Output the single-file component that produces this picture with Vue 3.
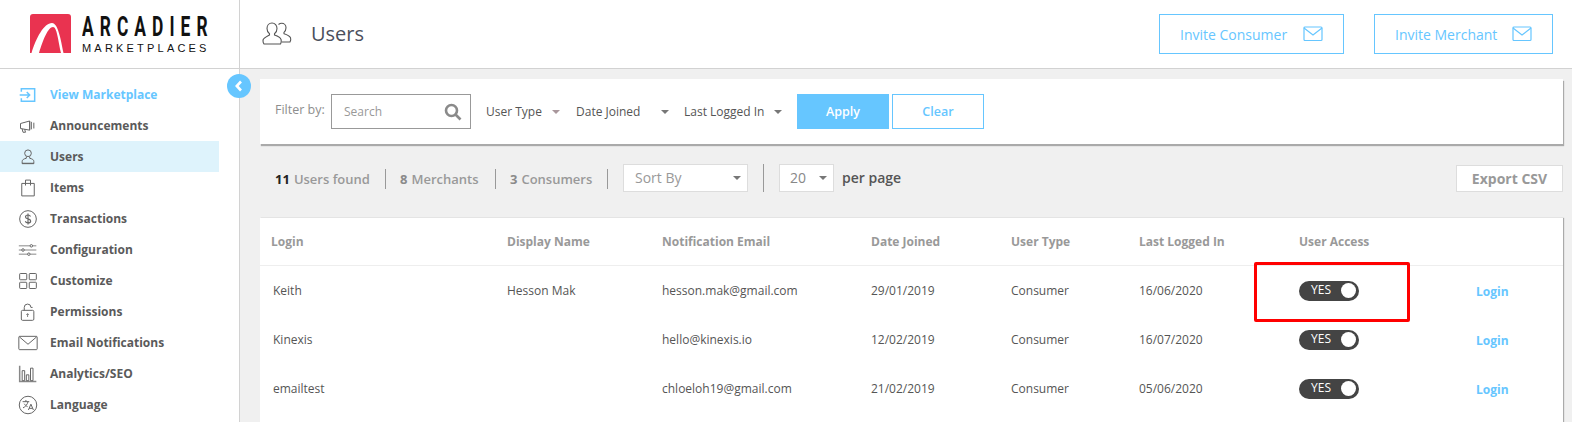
<template>
  <div class="page">
    <aside class="sidebar">
      <div class="logo">
        <svg class="logo-mark" width="41" height="39" viewBox="0 0 41 39">
          <path d="M3 0h35a3 3 0 0 1 3 3v36H0V3a3 3 0 0 1 3-3z" fill="#e93350" />
          <path d="M1.500 39C6 24 14 9 22 9 28 9 31 26 33.500 39H31C28 26 27 13 23 13 18 13 13 26 9 39H1.500z" fill="#fff" />
        </svg>
        <div class="logo-text">
          <span class="logo-name">ARCADIER</span>
          <span class="logo-sub">MARKETPLACES</span>
        </div>
      </div>
      <nav class="nav">
        <a
          v-for="item in navItems"
          :key="item.label"
          class="nav-item"
          :class="{ active: item.active, link: item.link }"
        >
          <svg class="nav-icon" width="24" height="24" viewBox="0 0 24 24" fill="none" stroke="currentColor" stroke-width="1.200" v-html="item.icon"></svg>
          <span>{{ item.label }}</span>
        </a>
      </nav>
    </aside>

    <button class="collapse">
      <svg width="10" height="12" viewBox="0 0 10 12"><path d="M7 1.500 2.800 6 7 10.500" fill="none" stroke="#fff" stroke-width="2.600" /></svg>
    </button>

    <div class="main">
      <header class="topbar">
        <div class="title">
          <svg width="32" height="28" viewBox="0 0 32 28" fill="none" stroke="#555" stroke-width="1.100">
            <path d="M10 3c3 0 5 2.500 5 5.500 0 2.500-1.200 4.300-2.500 5.200v1.300c3 1 6 2.300 6.500 4.500.4 1.500.3 3-.5 4.500H2c-1-1.500-1.200-3-.8-4.500C2 18 5 16.500 7.500 15v-1.300C6.200 12.800 5 11 5 8.500 5 5.500 7 3 10 3z" />
            <path d="M16.500 4.500c1-.8 2-1.200 3.200-1.200 2.500 0 4.300 2 4.300 4.500 0 2-.8 3.500-2 4.500v1.400c2.500.8 5.500 2 6.500 4 .5 1.500.3 3-.5 4.300h-8.300" />
          </svg>
          <h1>Users</h1>
        </div>
        <div class="invites">
          <button class="invite consumer">
            <span>Invite Consumer</span>
            <svg width="20" height="16" viewBox="0 0 20 16" fill="none" stroke="#66c6ff" stroke-width="1.200"><rect x="1" y="1" width="18" height="13.500" rx="1" /><path d="M1 2l9 7 9-7" /></svg>
          </button>
          <button class="invite merchant">
            <span>Invite Merchant</span>
            <svg width="20" height="16" viewBox="0 0 20 16" fill="none" stroke="#66c6ff" stroke-width="1.200"><rect x="1" y="1" width="18" height="13.500" rx="1" /><path d="M1 2l9 7 9-7" /></svg>
          </button>
        </div>
      </header>

      <div class="content">
        <section class="filters">
          <label class="filter-label">Filter by:</label>
          <div class="search">
            <span>Search</span>
            <svg width="18" height="18" viewBox="0 0 18 18" fill="none" stroke="#8a8a8a" stroke-width="2.600"><circle cx="7.500" cy="7.500" r="5.500" /><path d="M11.500 11.500 16.500 16.500" /></svg>
          </div>
          <div class="drop user-type">User Type<i class="caret light"></i></div>
          <div class="drop date-joined">Date Joined<i class="caret"></i></div>
          <div class="drop last-logged">Last Logged In<i class="caret"></i></div>
          <button class="apply">Apply</button>
          <button class="clear">Clear</button>
        </section>

        <section class="stats">
          <span class="stat first"><b>11</b> Users found</span>
          <span class="stat second"><em>8</em> Merchants</span>
          <span class="stat third"><em>3</em> Consumers</span>
          <div class="box sort">Sort By<i class="caret"></i></div>
          <span class="sep"></span>
          <div class="box size">20<i class="caret"></i></div>
          <span class="per">per page</span>
          <button class="export">Export CSV</button>
        </section>

        <section class="table">
          <div class="row head">
            <div v-for="h in headers" :key="h">{{ h }}</div>
          </div>
          <div v-for="u in users" :key="u.login" class="row">
            <div class="login-name">{{ u.login }}</div>
            <div>{{ u.display }}</div>
            <div>{{ u.email }}</div>
            <div>{{ u.joined }}</div>
            <div>{{ u.type }}</div>
            <div>{{ u.last }}</div>
            <div><span class="toggle">YES<i></i></span></div>
            <div><a class="login-link">Login</a></div>
          </div>
          <div class="highlight"></div>
        </section>
      </div>
    </div>
  </div>
</template>

<script setup>
const navItems = [
  { label: 'View Marketplace', link: true, icon: '<path d="M4 8V4.500h16v15H4V16" stroke-width="1.800"/><path d="M2 12h12M10.500 8.500 14 12l-3.500 3.500" stroke-width="1.800"/>' },
  { label: 'Announcements', icon: '<path d="M3 9l11-3v11L3 15zM5 15.500l1 4h3l-1-3.500M16 7v9M19 8v7M14 6v11"/>' },
  { label: 'Users', active: true, icon: '<circle cx="12" cy="7.500" r="4"/><path d="M10 11.500v2c-3 .8-5 1.500-5 4v2.500h14v-2.500c0-2.500-2-3.200-5-4v-2M5 19.500h14"/>' },
  { label: 'Items', icon: '<path d="M4.500 6.500h15v15h-15zM9 9V2.500h6V9"/>' },
  { label: 'Transactions', icon: '<circle cx="12" cy="12" r="10"/><path d="M15 9c-.5-1.300-1.500-1.800-3-1.800-1.800 0-3 .8-3 2.300 0 3.200 6.200 1.600 6.200 4.800 0 1.500-1.300 2.400-3.200 2.400-1.600 0-2.800-.7-3.200-2M12 5.500v13" stroke-width="1.400"/>' },
  { label: 'Configuration', icon: '<path d="M1 7h21M1 12h21M1 17h21" stroke="#888"/><circle cx="16" cy="7" r="1.500" fill="#fff"/><circle cx="6" cy="12" r="1.500" fill="#fff"/><circle cx="13" cy="17" r="1.500" fill="#fff"/>' },
  { label: 'Customize', icon: '<rect x="2" y="3" width="8.500" height="7.500" rx=".8"/><rect x="13.500" y="3" width="8.500" height="7.500" rx=".8"/><rect x="2" y="13.500" width="8.500" height="7.500" rx=".8"/><rect x="13.500" y="13.500" width="8.500" height="7.500" rx=".8"/>' },
  { label: 'Permissions', icon: '<rect x="4" y="10" width="15" height="12" rx="1.500"/><path d="M7.500 10V6.500a4 4 0 0 1 8 0h2"/><path d="M11.500 14v4M10 15.500l1.500-1.500 1.500 1.500" stroke-width="1"/>' },
  { label: 'Email Notifications', icon: '<rect x="1" y="4" width="22" height="16" rx="1"/><path d="M1.500 4.500 12 13.500l10.500-9"/>' },
  { label: 'Analytics/SEO', icon: '<path d="M2 2v19h20" stroke-width="1.800" stroke="#888"/><path d="M5 8h3v12H5zM10 13h3v7h-3zM15 5h3v15h-3z"/>' },
  { label: 'Language', icon: '<circle cx="12" cy="12" r="10.500"/><path d="M5.500 8h8M9.500 6v2M12 8c-.5 3-3 6-6 7.500M7.500 10.500c1 1.500 2.500 3 4 3.500M12.500 18l3-7 3 7M13.500 16h4"/>' }
]

const headers = ['Login', 'Display Name', 'Notification Email', 'Date Joined', 'User Type', 'Last Logged In', 'User Access', '']

const users = [
  { login: 'Keith', display: 'Hesson Mak', email: 'hesson.mak@gmail.com', joined: '29/01/2019', type: 'Consumer', last: '16/06/2020' },
  { login: 'Kinexis', display: '', email: 'hello@kinexis.io', joined: '12/02/2019', type: 'Consumer', last: '16/07/2020' },
  { login: 'emailtest', display: '', email: 'chloeloh19@gmail.com', joined: '21/02/2019', type: 'Consumer', last: '05/06/2020' }
]
</script>

<style>
html, body { margin: 0; padding: 0; background: #f0f0f0; overflow: hidden; }
</style>

<style scoped>
.page { position: relative; display: flex; width: 1572px; height: 422px; overflow: hidden; background: #f0f0f0; font-family: "Open Sans", "Liberation Sans", sans-serif; color: #555; }
.sidebar { width: 239px; flex: none; background: #fff; border-right: 1px solid #d2d2d2; }
.logo { display: flex; align-items: flex-start; height: 69px; padding: 14px 0 0 30px; box-sizing: border-box; border-bottom: 1px solid #d2d2d2; }
.logo-mark { flex: none; }
.logo-text { display: flex; flex-direction: column; margin-left: 11px; color: #111; }
.logo-name { font-family: Roboto, sans-serif; font-size: 28px; line-height: 26px; font-weight: 700; letter-spacing: 9.800px; transform: scaleX(.62); transform-origin: left; white-space: nowrap; width: 126px; }
.logo-sub { font-family: "Liberation Sans", sans-serif; font-size: 11px; line-height: 12px; margin-top: 2px; letter-spacing: 3.200px; white-space: nowrap; }
.nav { display: flex; flex-direction: column; padding-top: 10px; }
.nav-item { display: flex; align-items: center; width: 219px; height: 31px; box-sizing: border-box; padding-left: 18px; font-size: 12px; font-weight: 700; color: #5a5a5a; }
.nav-item span { margin-left: 12px; }
.nav-icon { flex: none; width: 20px; height: 20px; color: #666; }
.nav-item.link, .nav-item.link .nav-icon { color: #66c6ff; }
.nav-item.active { background: #def3fc; }
.collapse { position: absolute; left: 227px; top: 74px; width: 24px; height: 24px; padding: 0; border: 0; border-radius: 50%; background: #66c6ff; display: flex; align-items: center; justify-content: center; }

.main { flex: 1; min-width: 0; display: flex; flex-direction: column; }
.topbar { display: flex; justify-content: space-between; align-items: flex-start; height: 69px; box-sizing: border-box; background: #fff; border-bottom: 1px solid #d2d2d2; padding: 14px 19px 0 22px; flex: none; }
.title { display: flex; align-items: center; height: 39px; }
.title h1 { margin: 0 0 0 17px; font-size: 20px; font-weight: 400; color: #4a4f5c; }
.invites { display: flex; gap: 30px; }
.invite { display: flex; align-items: center; justify-content: space-between; height: 40px; box-sizing: border-box; border: 1px solid #66c6ff; background: #fff; color: #66c6ff; font-family: inherit; font-size: 14px; padding: 0 20px 0 20px; }
.invite.consumer { width: 185px; }
.invite.merchant { width: 179px; }

.content { padding: 10px 9px 0 20px; flex: 1; }
.filters { display: flex; align-items: center; position: relative; height: 65px; box-sizing: border-box; background: #fff; box-shadow: 1px 2px 1px #aaa; padding-left: 15px; font-size: 12px; color: #555; }
.filter-label { color: #8e8e8e; font-size: 12.500px; margin-top: -4px; width: 56px; flex: none; }
.search { display: flex; align-items: center; justify-content: space-between; width: 140px; height: 35px; box-sizing: border-box; border: 1px solid #999; padding: 0 8px 0 12px; color: #999; flex: none; }
.drop { display: flex; align-items: center; white-space: nowrap; flex: none; }
.user-type { margin-left: 15px; width: 90px; }
.date-joined { width: 108px; }
.last-logged { width: 113px; }
.caret { display: block; width: 0; height: 0; border-left: 4px solid transparent; border-right: 4px solid transparent; border-top: 4px solid #777; margin-left: auto; }
.caret.light { border-top-color: #a9979c; }
.user-type .caret { margin-right: 16px; }
.date-joined .caret { margin-right: 15px; }
.last-logged .caret { margin-right: 15px; }
.apply, .clear { height: 35px; box-sizing: border-box; font-family: inherit; font-size: 12.500px; font-weight: 600; flex: none; }
.apply { width: 92px; border: 0; background: #66c6ff; color: #fff; }
.clear { width: 92px; margin-left: 3px; border: 1px solid #66c6ff; background: #fff; color: #66c6ff; }

.stats { display: flex; align-items: center; height: 28px; margin-top: 20px; padding-left: 15px; font-size: 13px; font-weight: 600; color: #999; }
.stat { display: flex; align-items: center; white-space: nowrap; gap: 4px; height: 20px; padding-right: 16px; margin-right: 15px; border-right: 1px solid #999; margin-top: 1px; }
.stat b { color: #222; font-weight: 700; }
.stat em { font-style: normal; font-weight: 700; color: #8a8a8a; }
.first { width: 94px; margin-right: 14px; }
.second { width: 79px; margin-right: 14px; }
.third { width: 81px; }
.box { display: flex; align-items: center; height: 28px; box-sizing: border-box; border: 1px solid #ddd; background: #fff; font-size: 14px; font-weight: 400; color: #999; flex: none; padding-bottom: 2px; }
.box .caret { margin-top: 2px; }
.sort { width: 125px; padding-left: 11px; padding-right: 6px; }
.sep { width: 1px; height: 28px; background: #999; margin: 0 15px; flex: none; }
.size { width: 55px; padding-left: 10px; padding-right: 6px; color: #888; }
.per { margin-left: 8px; color: #555; font-size: 14px; margin-top: -2px; }
.export { margin-left: auto; width: 107px; height: 27px; box-sizing: border-box; border: 1px solid #ddd; background: #fff; color: #999; font-family: inherit; font-size: 14px; font-weight: 700; }

.table { position: relative; margin-top: 26px; background: #fff; box-shadow: 1px 0 1px #aaa; height: 220px; }
.row { display: grid; grid-template-columns: 247px 155px 209px 140px 128px 160px 177px 60px; height: 49px; align-items: center; font-size: 12px; color: #555; }
.row > div:first-child { padding-left: 11px; }
.row.head { height: 48px; box-sizing: border-box; border-bottom: 1px solid #eee; font-weight: 700; color: #999; }
.row > div.login-name { padding-left: 13px; }
.toggle { position: relative; display: flex; align-items: center; width: 60px; height: 20px; box-sizing: border-box; border-radius: 10px; background: #444; color: #fff; font-size: 12px; padding: 0 0 2px 12px; }
.toggle i { position: absolute; right: 3px; top: 2.500px; width: 15px; height: 15px; border-radius: 50%; background: #fff; }
.login-link { display: block; margin-top: 2px; color: #66c6ff; font-weight: 700; font-size: 12px; }
.highlight { position: absolute; left: 994px; top: 44px; width: 156px; height: 60px; box-sizing: border-box; border: 3px solid #f00; border-radius: 2px; }
</style>
